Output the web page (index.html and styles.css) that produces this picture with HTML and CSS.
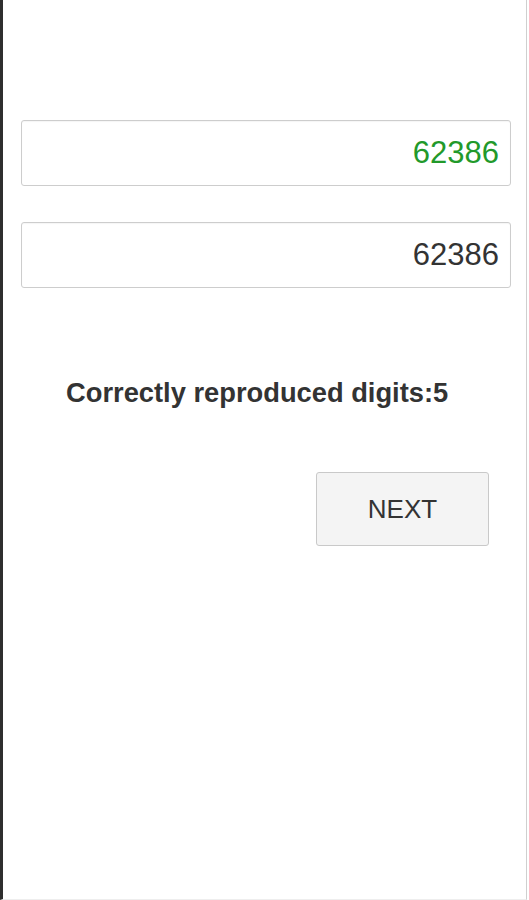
FILE: index.html
```html
<!DOCTYPE html>
<html lang="en">
<head>
    <meta charset="UTF-8">
    <meta name="viewport" content="width=device-width, initial-scale=1.0">
    <title>Digit Span</title>
    <link rel="stylesheet" href="styles.css">
</head>
<body>
    <div class="screen">
        <input type="text" class="digits digits-target" value="62386" readonly>
        <input type="text" class="digits" id="answer" value="62386">

        <p class="score">Correctly reproduced digits:<span id="score">5</span></p>

        <div class="actions">
            <button class="next-btn">NEXT</button>
        </div>
    </div>
</body>
</html>
```

FILE: styles.css
```css
body {
    margin: 0;
    background-color: #fff;
    font-family: 'Liberation Sans', Arial, sans-serif;
    color: #333;
}

.screen {
    box-sizing: border-box;
    width: 527px;
    height: 900px;
    padding: 120px 15px 0 18px;
    border-left: 3px solid #2e2e2e;
    border-right: 1px solid #cfcfcf;
    border-bottom: 1px solid #eee;
    display: flex;
    flex-direction: column;
}

.digits {
    box-sizing: border-box;
    width: 100%;
    height: 66px;
    margin: 0 0 36px 0;
    padding: 0 11px 0 11px;
    border: 1px solid #cdcdcd;
    border-radius: 3px;
    box-shadow: inset 0 1px 1px rgba(0, 0, 0, 0.04);
    background: #fff;
    font-family: 'Liberation Sans', Arial, sans-serif;
    font-size: 31px;
    color: #333;
    text-align: right;
}

.digits:focus {
    outline: none;
}

.digits-target {
    color: #22992a;
}

.score {
    margin: 53px 0 0 45px;
    font-size: 27.3px;
    line-height: 32px;
    font-weight: bold;
    color: #333;
}

.actions {
    display: flex;
    justify-content: flex-end;
    margin-top: 63px;
    padding-right: 22px;
}

.next-btn {
    width: 173px;
    height: 74px;
    background-color: #f4f4f4;
    border: 1px solid #c9c9c9;
    border-radius: 3px;
    font-family: 'Liberation Sans', Arial, sans-serif;
    font-size: 26px;
    color: #333;
    cursor: pointer;
}
```
